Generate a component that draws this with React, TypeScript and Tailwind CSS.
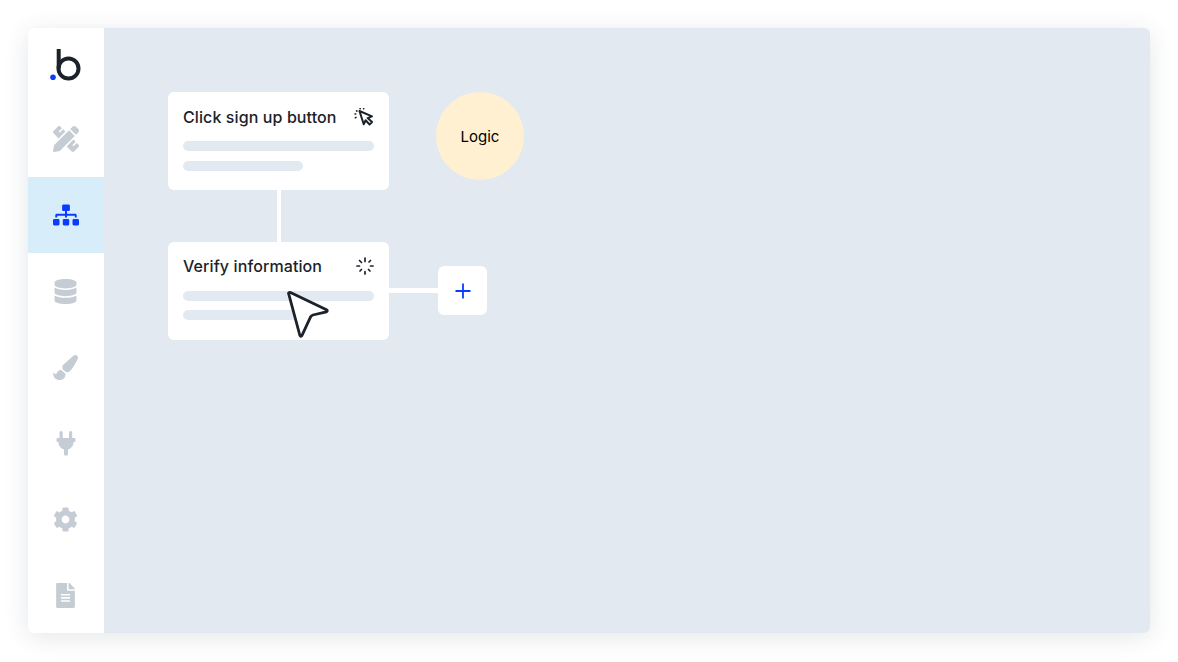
import type { ReactNode } from "react"
import { FaCog, FaDatabase, FaFileAlt, FaPaintBrush, FaPencilRuler, FaSitemap } from "react-icons/fa"

function PlugIcon() {
  return (
    <svg width="20" height="25" viewBox="0 0 20 25" fill="#c5ccd3">
      <rect x="3.500" y="0" width="3.200" height="8" rx="1.600" />
      <rect x="13" y="0" width="3.200" height="8" rx="1.600" />
      <path d="M1.500 7h17a1 1 0 0 1 1 1v2a1 1 0 0 1-1 1h-1c0 3.500-2.200 6.400-5.500 7.600v5a1 1 0 0 1-1 1H9a1 1 0 0 1-1-1v-5C4.700 17.400 2.500 14.500 2.500 11h-1a1 1 0 0 1-1-1V8a1 1 0 0 1 1-1z" />
    </svg>
  )
}

function ClickIcon() {
  return (
    <svg className="mr-[1px]" width="19" height="18" viewBox="0 0 19 18" fill="none" stroke="#1b2229" strokeWidth="2" strokeLinejoin="round" strokeLinecap="round">
      <path d="M5.500 3L18 8.300l-4.300 1.800 4.300 4-2.400 2.400-4-4.200-1.900 4z" />
      <path d="M6 .7h.3M9.500 .7h.3M2.500 2.700l.4.4M1 6h.8M1.300 9.800l.7-.4" strokeWidth="1.500" />
    </svg>
  )
}

function SpinnerIcon() {
  return (
    <svg width="18" height="18" viewBox="0 0 18 18" fill="none" stroke="#1b2229" strokeWidth="1.700" strokeLinecap="round">
      <path d="M9 1v3.500M14.500 3.500L13 5M17 9h-2.500M14 14l-1.500-1.500M9 17v-2.500M4 14l1.500-1.500M1 9h2.500M3.500 3.500l2 2" />
    </svg>
  )
}

function Pointer() {
  return (
    <svg width="46" height="50" viewBox="0 0 46 50" fill="#fff" stroke="#1b2229" strokeWidth="2.800" strokeLinejoin="round">
      <path d="M3.500 3.200c.4-.8 1.200-1 2-.7l36 17.300c1.200.6 1 1.700-.1 2l-13.500 3.200c-1 .3-1.700.8-2.200 1.700l-8.800 19c-.6 1.100-1.700.9-2-.2z" />
    </svg>
  )
}

function Logo() {
  return (
    <svg width="32" height="34" viewBox="0 0 32 34" fill="none">
      <circle cx="3" cy="29.300" r="2.800" fill="#0a3cff" />
      <path d="M8.700 1v19.500" stroke="#1b2229" strokeWidth="4" />
      <circle cx="18.500" cy="20.500" r="10" stroke="#1b2229" strokeWidth="4" />
    </svg>
  )
}

function NodeCard({ title, icon, second }: { title: string; icon: ReactNode; second?: boolean }) {
  return (
    <div className={`shrink-0 bg-white rounded-[6px] w-[221px] h-[98px] px-[15px] ${second ? "pt-[13px]" : "pt-[14px]"}`}>
      <div className="flex items-center justify-between h-[22px]">
        <span className="text-[16px] leading-[22px] font-medium tracking-[0.1px] text-[#1b2229]">{title}</span>
        {icon}
      </div>
      <div className={`${second ? "mt-[14px]" : "mt-[13px]"} h-[10px] rounded-full bg-[#e3e9f1]`} />
      <div className={`${second ? "mt-[9px]" : "mt-[10px]"} h-[10px] w-[120px] rounded-full bg-[#e3e9f1]`} />
    </div>
  )
}

const navItems = [
  { icon: <FaPencilRuler size={26} color="#c5ccd3" /> },
  { icon: <FaSitemap size={26} color="#0a3cff" />, active: true },
  { icon: <FaDatabase size={25} color="#c5ccd3" /> },
  { icon: <FaPaintBrush size={25} color="#c5ccd3" /> },
  { icon: <PlugIcon /> },
  { icon: <FaCog size={25} color="#c5ccd3" /> },
  { icon: <FaFileAlt size={25} color="#c5ccd3" /> },
]

export default function App() {
  return (
    <div className="w-[1178px] h-[662px] bg-white p-[28px] font-['Inter',sans-serif]">
      <div className="flex h-[605px] rounded-[6px] overflow-hidden shadow-[0_4px_24px_rgba(30,50,80,0.12)]">
        <aside className="w-[76px] shrink-0 bg-white flex flex-col">
          <div className="h-[73px] pr-[1px] flex items-center justify-center">
            <Logo />
          </div>
          {navItems.map((item, i) => (
            <div key={i} className={`h-[76px] pr-[1px] flex items-center justify-center ${item.active ? "bg-[#d7edfa]" : ""}`}>
              {item.icon}
            </div>
          ))}
        </aside>
        <main className="flex-1 bg-[#e3e9f1] pl-[64px] pt-[64px] flex flex-col">
          <div className="flex items-start gap-[47px]">
            <NodeCard title="Click sign up button" icon={<ClickIcon />} />
            <div className="w-[88px] h-[88px] pt-[2px] rounded-full bg-[#fff0d2] flex items-center justify-center text-[15px] text-black">
              Logic
            </div>
          </div>
          <div className="ml-[109px] w-[4px] h-[52px] bg-white" />
          <div className="relative flex items-start">
            <NodeCard title="Verify information" icon={<SpinnerIcon />} second />
            <div className="mt-[46px] w-[49px] h-[5px] bg-white" />
            <div className="mt-[24px] w-[49px] h-[49px] rounded-[6px] bg-white flex items-center justify-center">
              <svg width="16" height="16" viewBox="0 0 16 16" stroke="#0a3cff" strokeWidth="1.800">
                <path d="M8 .5v15M.5 8h15" />
              </svg>
            </div>
            <div className="absolute left-[117px] top-[48px]">
              <Pointer />
            </div>
          </div>
        </main>
      </div>
    </div>
  )
}
